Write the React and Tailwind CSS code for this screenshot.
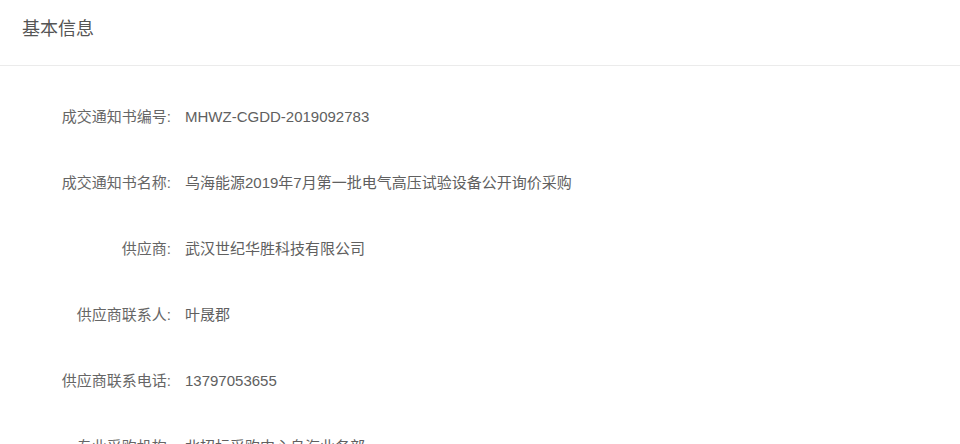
const rows = [
  { label: "成交通知书编号:", value: "MHWZ-CGDD-2019092783" },
  { label: "成交通知书名称:", value: "乌海能源2019年7月第一批电气高压试验设备公开询价采购" },
  { label: "供应商:", value: "武汉世纪华胜科技有限公司" },
  { label: "供应商联系人:", value: "叶晟郡" },
  { label: "供应商联系电话:", value: "13797053655" },
  { label: "专业采购机构:", value: "北招标采购中心乌海业务部" },
];

export default function App() {
  return (
    <div
      className="h-[444px] w-[960px] overflow-hidden bg-white"
      style={{ fontFamily: '"Liberation Sans", "Noto Sans CJK SC", sans-serif' }}
    >
      <div className="flex h-[66px] items-center border-b border-[#ebebeb] px-[22px] pb-[6px]">
        <h2 className="text-[18px] font-normal text-[#555]">基本信息</h2>
      </div>
      <div className="pt-[18px]">
        {rows.map((row) => (
          <div key={row.label} className="flex h-[66px] items-center text-[15px]">
            <div className="w-[171px] shrink-0 text-right text-[#666]">{row.label}</div>
            <div className="ml-[14px] text-[#606060]">{row.value}</div>
          </div>
        ))}
      </div>
    </div>
  );
}
